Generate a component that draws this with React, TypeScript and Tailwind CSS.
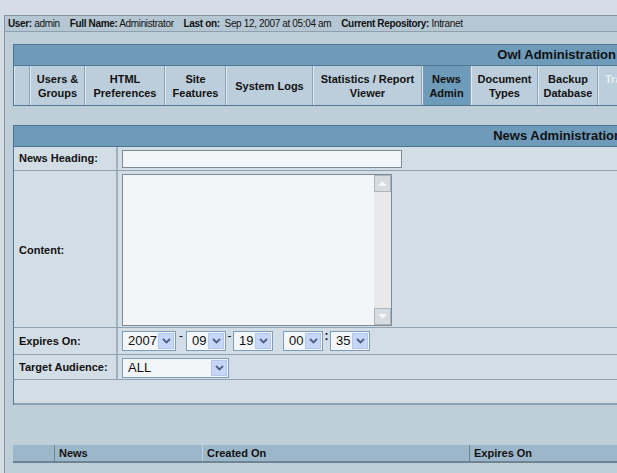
import { ReactNode } from 'react';

const TABS: { label: ReactNode; w: string; active?: boolean }[] = [
  { label: '', w: 'w-[16px]' },
  { label: <>Users &amp;<br />Groups</>, w: 'w-[55px]' },
  { label: <>HTML<br />Preferences</>, w: 'w-[80px]' },
  { label: <>Site<br />Features</>, w: 'w-[61px]' },
  { label: 'System Logs', w: 'w-[87px]' },
  { label: <>Statistics / Report<br />Viewer</>, w: 'w-[109px]' },
  { label: <>News<br />Admin</>, w: 'w-[49px]', active: true },
  { label: <>Document<br />Types</>, w: 'w-[67px]' },
  { label: <>Backup<br />Database</>, w: 'w-[60px]' },
];

function Chevron() {
  return (
    <svg width="9" height="6" viewBox="0 0 9 6">
      <path d="M1 1 L4.5 4.5 L8 1" fill="none" stroke="#4d6185" strokeWidth="1.8" />
    </svg>
  );
}

function Select({ value, w }: { value: string; w: string }) {
  return (
    <div className={`${w} h-[20px] flex items-stretch border border-[#7f9db9] bg-[#f3f6f9] p-[1px]`}>
      <span className="flex-1 pl-[4px] text-[13px] leading-[16px]">{value}</span>
      <span className="w-[16px] flex items-center justify-center bg-[#c6d6f7] border border-[#b3c6ee]">
        <Chevron />
      </span>
    </div>
  );
}

function Row({ label, children, h }: { label: string; children?: ReactNode; h: string }) {
  return (
    <div className={`flex ${h} border-b border-[#8fa2b1]`}>
      <div className="w-[104px] shrink-0 flex items-center pl-[5px] font-bold text-[11px] border-r-2 border-r-[#9fb0bd]">
        {label}
      </div>
      <div className="flex-1 flex items-start pl-[4px] pt-[3px]">{children}</div>
    </div>
  );
}

export default function App() {
  return (
    <div
      className="w-[617px] h-[473px] overflow-hidden bg-[#d4dde5] text-[#111] pt-[15px]"
      style={{ fontFamily: '"Liberation Sans", Arial, sans-serif' }}
    >
      <div className="w-[660px] ml-[4px]">
        {/* user bar */}
        <div className="h-[17px] flex items-center gap-[10px] pl-[3px] text-[10px] tracking-[-0.35px] bg-[#b6c7d4] border-t border-l border-[#8495a3] border-b border-b-[#8ea0ae]">
          <span><b>User:</b> admin</span>
          <span><b>Full Name:</b> Administrator</span>
          <span><b>Last on:</b>&nbsp; Sep 12, 2007 at 05:04 am</span>
          <span><b>Current Repository:</b> Intranet</span>
        </div>

        {/* main frame */}
        <div className="bg-[#bfcfda] border-l border-[#8495a3] pl-[8px] pt-[12px] pb-[20px]">
          {/* Owl Administration */}
          <div className="w-[617px] border border-[#4f7592]">
            <div className="h-[20px] bg-[#6f9bbb] flex items-center justify-end pr-[13px] text-[13px] font-bold">
              Owl Administration
            </div>
            <div className="flex h-[40px] border-t border-[#4f7592] bg-[#bccedb]">
              {TABS.map((t, i) => (
                <div
                  key={i}
                  className={`${t.w} shrink-0 flex items-center justify-center text-center text-[11px] font-bold leading-[14px] border-r border-[#8fa3b3] border-l border-l-[#e1e9ef] ${
                    t.active ? 'bg-[#6f9bbb]' : ''
                  }`}
                >
                  {t.label}
                </div>
              ))}
              <div className="flex-1 pl-[6px] pt-[6px] text-[11px] font-bold leading-[14px] text-[#e6edf2] border-l border-l-[#e1e9ef] whitespace-nowrap">
                Trash Can
              </div>
            </div>
          </div>

          {/* News Administration */}
          <div className="w-[617px] mt-[19px] border-t border-l border-[#4f7592] bg-[#d3dde5]">
            <div className="h-[21px] bg-[#6f9bbb] flex items-center justify-end pr-[8px] text-[13px] font-bold border-b border-[#4f7592]">
              News Administration
            </div>
            <Row label="News Heading:" h="h-[24px]">
              <div className="w-[280px] h-[18px] border border-[#7e8b95] bg-[#f2f6f9]" />
            </Row>
            <div className="flex h-[157px] border-b border-[#8fa2b1]">
              <div className="w-[104px] shrink-0 flex items-center pl-[5px] pt-[3px] font-bold text-[11px] border-r-2 border-r-[#9fb0bd]">
                Content:
              </div>
              <div className="flex-1 pl-[4px] pt-[3px]">
                <div className="w-[270px] h-[152px] border border-[#7e8b95] bg-[#f2f6f9] flex justify-end">
                  <div className="w-[17px] flex flex-col bg-[#e9e9ec]">
                    <div className="h-[17px] bg-[#d6dbe0] border border-[#aeb6bd] flex items-center justify-center">
                      <svg width="9" height="5" viewBox="0 0 9 5"><path d="M0 5 L4.5 0 L9 5 Z" fill="#f4f6f8" /></svg>
                    </div>
                    <div className="flex-1" />
                    <div className="h-[17px] bg-[#d6dbe0] border border-[#aeb6bd] flex items-center justify-center">
                      <svg width="9" height="5" viewBox="0 0 9 5"><path d="M0 0 L4.5 5 L9 0 Z" fill="#f4f6f8" /></svg>
                    </div>
                  </div>
                </div>
              </div>
            </div>
            <Row label="Expires On:" h="h-[27px]">
              <div className="flex items-center">
                <Select value="2007" w="w-[54px]" />
                <span className="w-[10px] text-center text-[12px] leading-[10px] self-start">-</span>
                <Select value="09" w="w-[40px]" />
                <span className="w-[7px] text-center text-[12px] leading-[10px] self-start">-</span>
                <Select value="19" w="w-[40px]" />
                <span className="w-[10px]" />
                <Select value="00" w="w-[40px]" />
                <span className="w-[7px] text-center text-[12px] leading-[10px] self-start font-bold">:</span>
                <Select value="35" w="w-[40px]" />
              </div>
            </Row>
            <Row label="Target Audience:" h="h-[25px]">
              <Select value="ALL" w="w-[107px]" />
            </Row>
            <div className="h-[25px] border-b-2 border-[#8fa2b1]" />
          </div>

          {/* News list header */}
          <div className="w-[617px] mt-[40px] flex h-[18px] bg-[#9cb6ca] border-b-2 border-[#6f8393] text-[11px] font-bold">
            <div className="w-[42px] border-r border-[#6f8393]" />
            <div className="w-[148px] pl-[4px] flex items-center border-r border-[#c9d6e0]">News</div>
            <div className="w-[267px] pl-[4px] flex items-center border-r border-[#6f8393]">Created On</div>
            <div className="flex-1 pl-[4px] flex items-center">Expires On</div>
          </div>
        </div>
      </div>
    </div>
  );
}
